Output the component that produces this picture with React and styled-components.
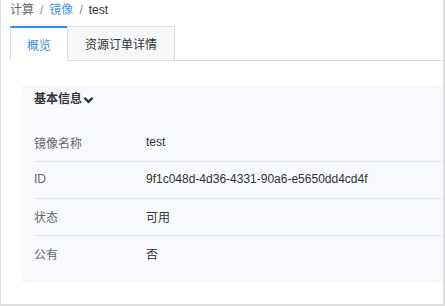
import React from 'react';
import styled, { createGlobalStyle } from 'styled-components';

const GlobalStyle = createGlobalStyle`
  * {
    box-sizing: border-box;
  }
  body {
    margin: 0;
    background: #fff;
    font-family: 'Liberation Sans', 'Noto Sans CJK SC', sans-serif;
    font-size: 12px;
    color: #333;
  }
`;

const rows = [
  { label: '镜像名称', value: 'test' },
  { label: 'ID', value: '9f1c048d-4d36-4331-90a6-e5650dd4cd4f' },
  { label: '状态', value: '可用' },
  { label: '公有', value: '否' },
];

export default function App() {
  return (
    <>
      <GlobalStyle />
      <Page>
        <Breadcrumb>
          <Crumb>计算</Crumb>
          <Sep>/</Sep>
          <Crumb $link>镜像</Crumb>
          <Sep>/</Sep>
          <Crumb $current>test</Crumb>
        </Breadcrumb>
        <Tabs>
          <Tab $active>概览</Tab>
          <Tab>资源订单详情</Tab>
        </Tabs>
        <Content>
          <Panel>
            <PanelTitle>
              基本信息
              <svg width='11' height='8' viewBox='0 0 11 8'>
                <path d='M1.5 1.8 L5.5 5.8 L9.5 1.8' fill='none' stroke='#333' strokeWidth='2.4' />
              </svg>
            </PanelTitle>
            {rows.map((row) => (
              <Row key={row.label}>
                <Label>{row.label}</Label>
                <Value>{row.value}</Value>
              </Row>
            ))}
          </Panel>
        </Content>
      </Page>
    </>
  );
}

const Page = styled.div`
  width: 445px;
  height: 306px;
  border-left: 1px solid #dedede;
  border-right: 2px solid #dedede;
  border-bottom: 2px solid #dedede;
  display: flex;
  flex-direction: column;
`;

const Breadcrumb = styled.div`
  height: 27px;
  padding-left: 9px;
  display: flex;
  align-items: flex-start;
  line-height: 21px;
  font-size: 12px;
`;

const Crumb = styled.span`
  color: ${({ $link, $current }) => ($link ? '#4a9ae8' : $current ? '#333' : '#666')};
`;

const Sep = styled.span`
  color: #888;
  margin: 0 6px;
`;

const Tabs = styled.div`
  margin-left: 9px;
  height: 35px;
  display: flex;
  border-bottom: 1px solid #dcdcdc;
`;

const Tab = styled.div`
  height: 35px;
  padding: 0 ${({ $active }) => ($active ? '16px' : '17px')};
  display: flex;
  align-items: center;
  font-size: 12px;
  border: 1px solid #dcdcdc;
  border-top: ${({ $active }) => ($active ? '2px solid #2b8ff0' : '1px solid #dcdcdc')};
  border-bottom: 1px solid ${({ $active }) => ($active ? '#fff' : '#dcdcdc')};
  background: ${({ $active }) => ($active ? '#fff' : '#f7f8fa')};
  color: ${({ $active }) => ($active ? '#3a92ea' : '#333')};
  & + & {
    margin-left: -1px;
  }
`;

const Content = styled.div`
  padding: 24px 0 21px 21px;
  flex: 1;
  display: flex;
`;

const Panel = styled.div`
  flex: 1;
  background: #f8f9fc;
  padding: 0 0 10px 12px;
`;

const PanelTitle = styled.div`
  height: 40px;
  line-height: 28px;
  font-weight: bold;
  font-size: 12px;
  color: #333;
  display: flex;
  align-items: flex-start;
  gap: 1px;

  svg {
    margin-top: 11px;
  }
`;

const Row = styled.div`
  height: 37px;
  display: grid;
  grid-template-columns: 112px 1fr;
  align-items: center;
  padding-bottom: 2px;
  border-bottom: 1px solid #e4e7ed;

  &:last-child {
    border-bottom: none;
  }
`;

const Label = styled.div`
  color: #666;
`;

const Value = styled.div`
  color: #333;
`;
